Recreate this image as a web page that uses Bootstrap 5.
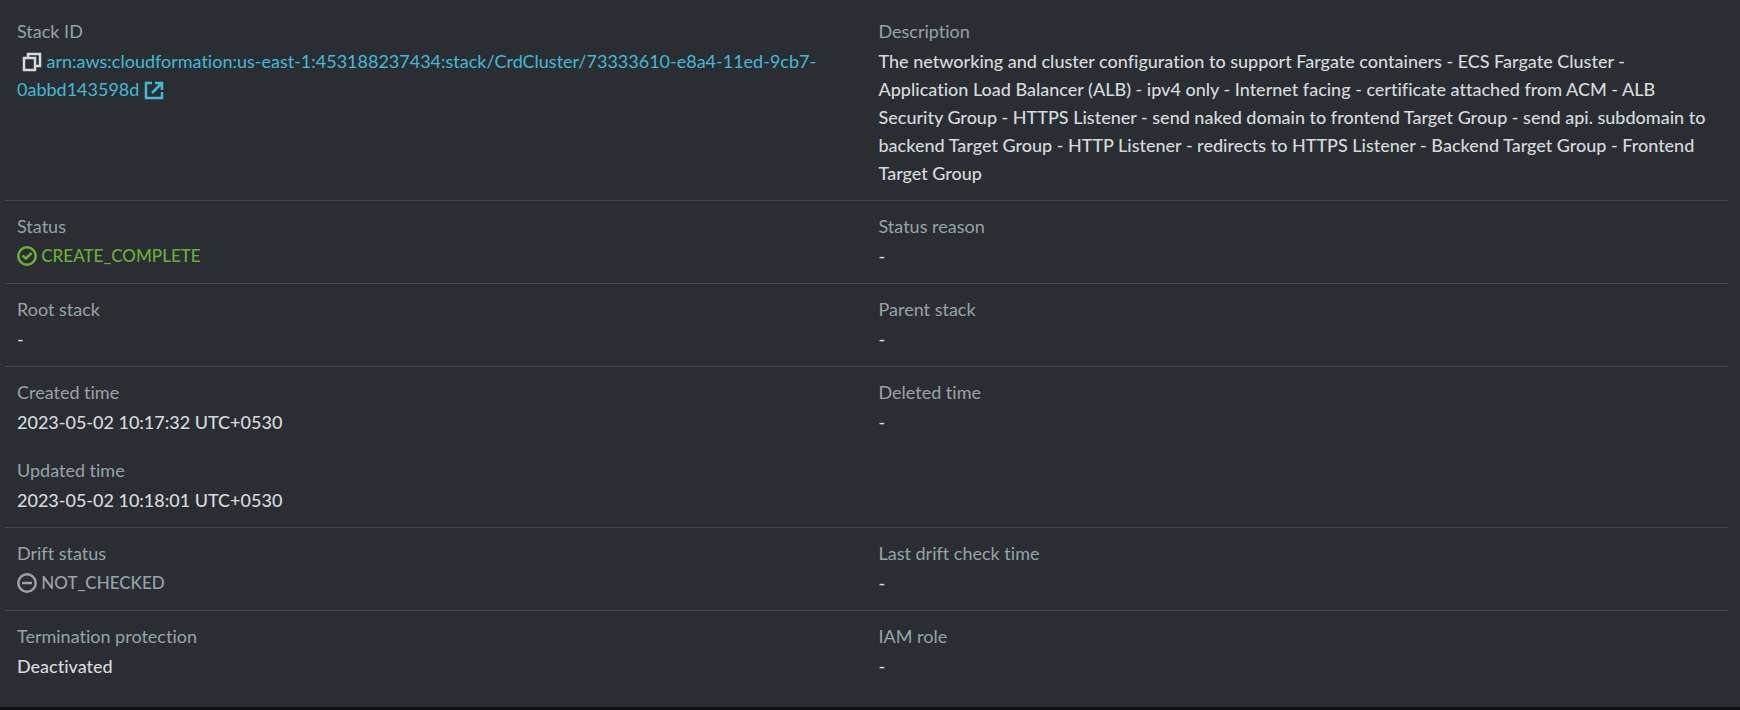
<!DOCTYPE html>
<html lang="en">
<head>
<meta charset="utf-8">
<meta name="viewport" content="width=device-width, initial-scale=1">
<title>Stack overview</title>
<link href="https://cdn.jsdelivr.net/npm/bootstrap@5.3.0/dist/css/bootstrap.min.css" rel="stylesheet">
<style>
  body {
    background: #2a2e33;
    color: #d5dbdb;
    font-family: Lato, "Noto Sans", sans-serif;
    font-size: 18px;
    line-height: 28px;
    font-variant-ligatures: none;
  }
  .overview { padding: 6px 12px 12px 5px; border-bottom: 3px solid #0f1014; min-height: 100vh; }
  .overview .row + .row { border-top: 1px solid #414750; }
  .overview .col-sm-6 { padding: 11px 12px 13px; }
  dl { margin: 0; }
  dl + dl { margin-top: 20px; }
  dt { color: #95a5a6; font-weight: 400; margin-bottom: 2px; }
  dd { margin: 0; font-weight: 500; }
  dd a { color: #44b9d6; text-decoration: none; font-weight: 400; }
  dd svg { width: 20px; height: 20px; fill: none; stroke: currentColor; stroke-width: 2.5; vertical-align: -4px; }
  .copy-btn { border: 0; padding: 0 0 0 5px; background: none; color: #d5dbdb; line-height: 20px; }
  .state { font-size: 17px; }
  .state-ok { color: #6aaf35; }
  .state-none { color: #95a5a6; }
</style>
</head>
<body>
<main class="overview">
  <div class="row g-0">
    <div class="col-sm-6">
      <dl>
        <dt>Stack ID</dt>
        <dd><button class="copy-btn" type="button" aria-label="Copy stack ID"><svg viewBox="0 0 20 20"><path d="M2 6h11v12H2zM6 6V2h12v12h-5"/></svg></button> <a href="#">arn:aws:cloudformation:us-east-1:453188237434:stack/CrdCluster/73333610-e8a4-11ed-9cb7-0abbd143598d <svg viewBox="0 0 20 20"><path d="M8 3H2v15h16v-6M11 3h7v7M18 3L8 13"/></svg></a></dd>
      </dl>
    </div>
    <div class="col-sm-6">
      <dl>
        <dt>Description</dt>
        <dd>The networking and cluster configuration to support Fargate containers - ECS Fargate Cluster - Application Load Balancer (ALB) - ipv4 only - Internet facing - certificate attached from ACM - ALB Security Group - HTTPS Listener - send naked domain to frontend Target Group - send api. subdomain to backend Target Group - HTTP Listener - redirects to HTTPS Listener - Backend Target Group - Frontend Target Group</dd>
      </dl>
    </div>
  </div>
  <div class="row g-0">
    <div class="col-sm-6"><dl><dt>Status</dt><dd class="state state-ok"><svg viewBox="0 0 20 20"><circle cx="10" cy="10" r="8.7"/><path d="M5.5 9.5l3.5 3 5.500-5.500"/></svg> CREATE_COMPLETE</dd></dl></div>
    <div class="col-sm-6"><dl><dt>Status reason</dt><dd>-</dd></dl></div>
  </div>
  <div class="row g-0">
    <div class="col-sm-6"><dl><dt>Root stack</dt><dd>-</dd></dl></div>
    <div class="col-sm-6"><dl><dt>Parent stack</dt><dd>-</dd></dl></div>
  </div>
  <div class="row g-0">
    <div class="col-sm-6">
      <dl><dt>Created time</dt><dd>2023-05-02 10:17:32 UTC+0530</dd></dl>
      <dl><dt>Updated time</dt><dd>2023-05-02 10:18:01 UTC+0530</dd></dl>
    </div>
    <div class="col-sm-6"><dl><dt>Deleted time</dt><dd>-</dd></dl></div>
  </div>
  <div class="row g-0">
    <div class="col-sm-6"><dl><dt>Drift status</dt><dd class="state state-none"><svg viewBox="0 0 20 20"><circle cx="10" cy="10" r="8.7"/><path d="M5 10h10"/></svg> NOT_CHECKED</dd></dl></div>
    <div class="col-sm-6"><dl><dt>Last drift check time</dt><dd>-</dd></dl></div>
  </div>
  <div class="row g-0">
    <div class="col-sm-6"><dl><dt>Termination protection</dt><dd>Deactivated</dd></dl></div>
    <div class="col-sm-6"><dl><dt>IAM role</dt><dd>-</dd></dl></div>
  </div>
</main>
<script src="https://cdn.jsdelivr.net/npm/bootstrap@5.3.0/dist/js/bootstrap.bundle.min.js"></script>
</body>
</html>
